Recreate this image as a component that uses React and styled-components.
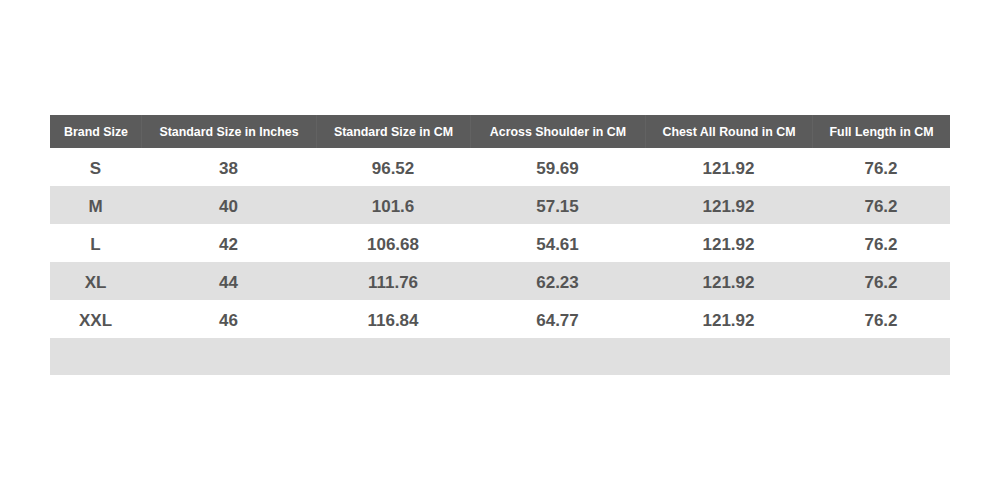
import React from 'react'
import styled, { createGlobalStyle } from 'styled-components'

const GlobalStyle = createGlobalStyle`
  body {
    margin: 0;
    background: #ffffff;
    font-family: "Liberation Sans", Arial, sans-serif;
  }
`

const columns = [
  { label: 'Brand Size', width: 91 },
  { label: 'Standard Size in Inches', width: 175 },
  { label: 'Standard Size in CM', width: 154 },
  { label: 'Across Shoulder in CM', width: 175 },
  { label: 'Chest All Round in CM', width: 167 },
  { label: 'Full Length in CM', width: 138 },
]

const rows = [
  ['S', '38', '96.52', '59.69', '121.92', '76.2'],
  ['M', '40', '101.6', '57.15', '121.92', '76.2'],
  ['L', '42', '106.68', '54.61', '121.92', '76.2'],
  ['XL', '44', '111.76', '62.23', '121.92', '76.2'],
  ['XXL', '46', '116.84', '64.77', '121.92', '76.2'],
  ['', '', '', '', '', ''],
]

const gridCols = columns.map((c) => `${c.width}px`).join(' ')

// styled components
const Page = styled.main`
  width: 1000px;
  height: 490px;
  padding: 115px 50px 0;
  box-sizing: border-box;
`

const Table = styled.section`
  width: 900px;
`

const HeaderRow = styled.div`
  display: grid;
  grid-template-columns: ${gridCols};
  height: 33px;
  background-color: #5b5b5b;
`

const HeaderCell = styled.div`
  display: flex;
  align-items: center;
  justify-content: center;
  color: #ffffff;
  font-size: 12.4px;
  font-weight: bold;
  border-left: 1px solid ${(p) => (p.$first ? 'transparent' : '#626262')};
`

const Row = styled.div`
  display: grid;
  grid-template-columns: ${gridCols};
  height: ${(p) => p.$height}px;
  background-color: ${(p) => (p.$striped ? '#e0e0e0' : '#ffffff')};
`

const Cell = styled.div`
  display: flex;
  align-items: center;
  justify-content: center;
  padding-top: 3px;
  color: #555555;
  font-size: 17px;
  font-weight: bold;
`

export default function App() {
  return (
    <>
      <GlobalStyle />
      <Page>
        <Table>
          <HeaderRow>
            {columns.map((c, i) => (
              <HeaderCell key={c.label} $first={i === 0}>
                {c.label}
              </HeaderCell>
            ))}
          </HeaderRow>

          {rows.map((r, i) => (
            <Row key={i} $striped={i % 2 === 1} $height={i === rows.length - 1 ? 37 : 38}>
              {r.map((v, j) => (
                <Cell key={j}>{v}</Cell>
              ))}
            </Row>
          ))}
        </Table>
      </Page>
    </>
  )
}
